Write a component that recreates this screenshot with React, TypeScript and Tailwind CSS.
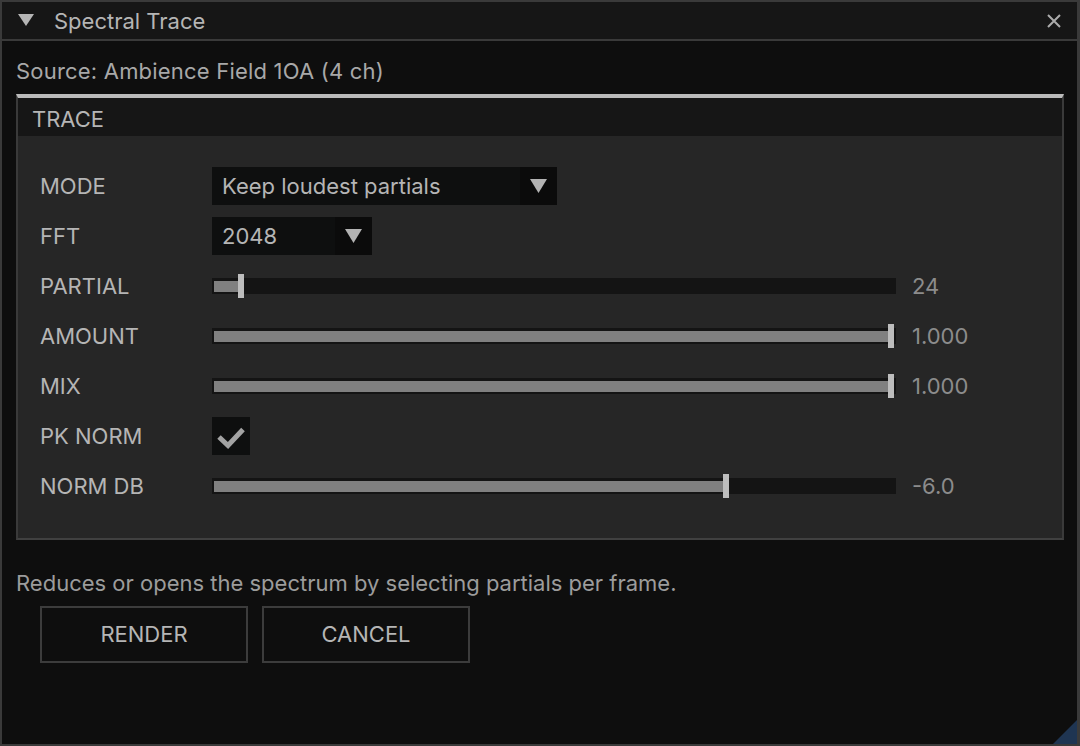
import React from "react";

const font = { fontFamily: "Inter, 'Noto Sans', sans-serif" };

function Slider({ pct, full }: { pct: number; full?: boolean }) {
  return (
    <div className="relative h-[16px] w-[684px] bg-[#141414]">
      <div
        className="absolute left-[2px] top-[3px] h-[11px] bg-[#808080]"
        style={{ width: `${pct}%` }}
      />
      <div
        className="absolute top-[-4px] h-[24px] w-[6px] bg-[#bdbdbd]"
        style={{ left: full ? "calc(100% - 8px)" : `calc(${pct}% - 1px)` }}
      />
    </div>
  );
}

function Combo({ text, width }: { text: string; width: string }) {
  return (
    <div className={`flex h-[38px] ${width} bg-[#0e0f0f]`}>
      <div className="flex flex-1 items-center pl-[10px] text-[22px] text-[#b5b5b5]">{text}</div>
      <div className="flex w-[37px] items-center justify-center bg-[#0b0b0b]">
        <svg width="17" height="14" viewBox="0 0 17 14">
          <polygon points="0,0 17,0 8.5,14" fill="#b3b3b3" />
        </svg>
      </div>
    </div>
  );
}

function Row({ label, children }: { label: string; children: React.ReactNode }) {
  return (
    <div className="flex h-[38px] items-center">
      <div className="w-[172px] text-[22px] text-[#b5b5b5]">{label}</div>
      {children}
    </div>
  );
}

function Value({ v }: { v: string }) {
  return <div className="ml-[16px] text-[22px] text-[#8c8c8c]">{v}</div>;
}

export default function App() {
  return (
    <div
      className="relative flex h-[746px] w-[1080px] flex-col overflow-hidden border-t-2 border-b-2 border-l-2 border-r-[3px] border-[#3a3a3a] bg-[#0e0e0e]"
      style={font}
    >
      {/* Title bar */}
      <div className="flex h-[39px] shrink-0 items-center border-b-2 border-[#3a3a3a] bg-[#161616] pl-[16px] pr-[16px]">
        <svg width="16" height="12" viewBox="0 0 16 12" className="mt-[-1px]">
          <polygon points="0,0 16,0 8,12" fill="#b5b5b5" />
        </svg>
        <div className="ml-[20px] flex-1 pt-[1px] text-[22px] text-[#b5b5b5]">Spectral Trace</div>
        <svg width="14" height="14" viewBox="0 0 14 14">
          <path d="M1 1 L13 13 M13 1 L1 13" stroke="#ababab" strokeWidth="2" />
        </svg>
      </div>

      {/* Body */}
      <div className="flex flex-1 flex-col pl-[14px] pr-[13px]">
        <div className="mt-[16px] h-[28px] text-[22px] leading-[28px] tracking-[0.2px] text-[#a8a8a8]">
          Source: Ambience Field 1OA (4 ch)
        </div>

        {/* Frame */}
        <div className="mt-[9px] flex h-[446px] flex-col border-t-4 border-l-2 border-r-2 border-b-2 border-t-[#bababa] border-l-[#3a3a3a] border-r-[#3a3a3a] border-b-[#404040] bg-[#262626]">
          <div className="flex h-[38px] shrink-0 items-center bg-[#161616] pl-[14px] pt-[4px] text-[22px] text-[#b5b5b5]">
            TRACE
          </div>
          <div className="flex flex-col gap-[12px] pl-[22px] pt-[31px]">
            <Row label="MODE">
              <Combo text="Keep loudest partials" width="w-[345px]" />
            </Row>
            <Row label="FFT">
              <Combo text="2048" width="w-[160px]" />
            </Row>
            <Row label="PARTIAL">
              <Slider pct={4} />
              <Value v="24" />
            </Row>
            <Row label="AMOUNT">
              <Slider pct={99.2} full />
              <Value v="1.000" />
            </Row>
            <Row label="MIX">
              <Slider pct={99.2} full />
              <Value v="1.000" />
            </Row>
            <Row label="PK NORM">
              <div className="h-[38px] w-[38px] bg-[#0e0f0f]">
                <svg width="38" height="38" viewBox="0 0 38 38">
                  <polyline
                    points="7,20 16,28.5 31,12.5"
                    fill="none"
                    stroke="#a3a3a3"
                    strokeWidth="5"
                  />
                </svg>
              </div>
            </Row>
            <Row label="NORM DB">
              <Slider pct={74.8} />
              <Value v="-6.0" />
            </Row>
          </div>
        </div>

        <div className="mt-[29px] h-[28px] text-[22px] leading-[28px] text-[#9c9c9c]">
          Reduces or opens the spectrum by selecting partials per frame.
        </div>
        <div className="ml-[24px] mt-[9px] flex gap-[14px]">
          <div className="flex h-[57px] w-[208px] items-center justify-center border-2 border-[#3c3c3c] text-[22px] text-[#b5b5b5]">
            RENDER
          </div>
          <div className="flex h-[57px] w-[208px] items-center justify-center border-2 border-[#3c3c3c] text-[22px] text-[#b5b5b5]">
            CANCEL
          </div>
        </div>
      </div>

      {/* Resize grip */}
      <svg className="absolute bottom-0 right-0" width="24" height="24" viewBox="0 0 24 24">
        <polygon points="24,0 24,24 0,24" fill="#1f3552" />
      </svg>
    </div>
  );
}
